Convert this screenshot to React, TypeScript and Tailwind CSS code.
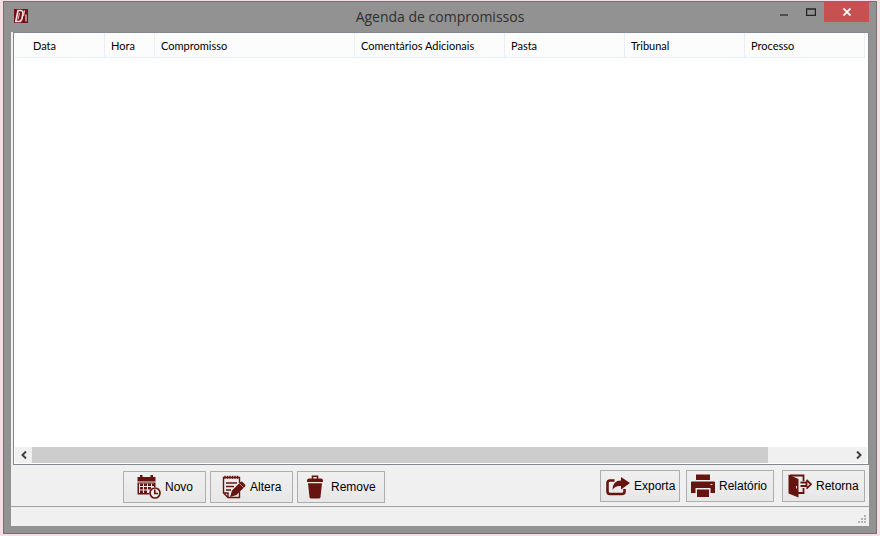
import type { ReactNode } from 'react'

const columns = [
  { label: 'Data', className: 'w-[90px] pl-[18px]' },
  { label: 'Hora', className: 'w-[50px] pl-1.5' },
  { label: 'Compromisso', className: 'w-[200px] pl-1.5' },
  { label: 'Comentários Adicionais', className: 'w-[150px] pl-1.5' },
  { label: 'Pasta', className: 'w-[120px] pl-1.5' },
  { label: 'Tribunal', className: 'w-[120px] pl-1.5' },
  { label: 'Processo', className: 'w-[120px] pl-1.5' },
]

function AppLogo() {
  return (
    <svg viewBox="0 0 14 14" className="h-3.5 w-3.5" aria-hidden="true">
      <rect width="14" height="14" fill="#6d1418" />
      <path d="M4 1.500h3q2.500 0 1.800 4L8 9.500q-.8 3-3 3H1.800z" fill="none" stroke="#f3dedd" strokeWidth="1.700" />
      <path d="M5.500 4 4 10.500" stroke="#e9bcbb" strokeWidth="1" />
      <path d="M10.500 1.500 9.500 7M12 5.500v7" fill="none" stroke="#f0cfce" strokeWidth="1.200" />
    </svg>
  )
}

function CalendarClockIcon() {
  return (
    <svg viewBox="0 0 24 24" className="h-6 w-6" fill="#661410" aria-hidden="true">
      <path d="M.5 2H3V0h2.500v2h8V0H16v2h2.500v4.500H.5z" />
      <path d="M.5 7.500h18v5H17V8.500H2v9.500h10v1.500H.5z" />
      <path d="M3 8.500h3V11H3zM7 8.500h3V11H7zM11 8.500h3V11h-3zM15 8.500h2.500V11H15zM3 12h3v2.500H3zM7 12h3v2.500H7zM11 12h3v2.500h-3zM3 15.500h3V18H3zM7 15.500h3V18H7z" />
      <circle cx="18" cy="18" r="6" fill="#ececec" />
      <circle cx="18" cy="18" r="5" fill="#ececec" stroke="#661410" strokeWidth="1.700" />
      <path d="M17.800 14.500V18.500H21" fill="none" stroke="#661410" strokeWidth="1.600" />
    </svg>
  )
}

function NotePencilIcon() {
  return (
    <svg viewBox="0 0 24 24" className="h-6 w-6" aria-hidden="true">
      <path d="M17.500 8V2.500H1.500V18L6 22.500h11.500V17M1.500 18H6v4.500" fill="none" stroke="#661410" strokeWidth="1.400" />
      <path d="M3 .8v3M5.500.8v3M8 .8v3M10.500.8v3M13 .8v3M15.500.8v3" stroke="#661410" strokeWidth="1.400" />
      <path d="M4 8h11M4 11.500h8M4 15h5" stroke="#661410" strokeWidth="1.600" />
      <path d="m10 15.500 8.500-8.500q1-.8 2 0L23 9.500q.8 1 0 2L14.500 20 8 22z" fill="#661410" />
      <path d="m17.500 8.500 4 4" stroke="#eeeeee" strokeWidth=".6" />
    </svg>
  )
}

function TrashIcon() {
  return (
    <svg viewBox="0 0 16 24" className="h-6 w-4" fill="#661410" aria-hidden="true">
      <path d="M5.500 4V1.300h5V4" fill="none" stroke="#661410" strokeWidth="1.600" />
      <path d="M2 3.500h12q2 0 2 2V7H0V5.500q0-2 2-2z" />
      <path d="M1 8.200h14L13.500 22q-.2 1.500-1.500 1.500H4q-1.300 0-1.500-1.500z" />
    </svg>
  )
}

function ExportIcon() {
  return (
    <svg viewBox="0 0 24 20" className="h-5 w-6" aria-hidden="true">
      <path d="M8.500 4.500H4q-2.500 0-2.500 2.500v8.500Q1.500 18 4 18h12q2.500 0 2.500-2.500V13" fill="none" stroke="#661410" strokeWidth="2.600" />
      <path d="M15 1 24 7l-9 6.500V10q-6-.5-8.500 4Q6.500 4.500 15 4.500z" fill="#661410" />
    </svg>
  )
}

function PrinterIcon() {
  return (
    <svg viewBox="0 0 24 24" className="h-6 w-6" fill="#661410" aria-hidden="true">
      <path d="M5 .5h14V6H5zM1 7.500h22q1 0 1 1V19h-4.500v-5h-15v5H0V8.500q0-1 1-1z" />
      <path d="M6 15.500h12v7.500H6z" />
      <path d="M19.500 10.500h2" stroke="#eeeeee" strokeWidth="1" />
    </svg>
  )
}

function DoorIcon() {
  return (
    <svg viewBox="0 0 24 24" className="h-6 w-6" aria-hidden="true">
      <path d="M2 1.500h13.500V7M15.500 14v5H10" fill="none" stroke="#661410" strokeWidth="1.800" />
      <path d="M.5.500 10.500 5v18.500L.5 19.500z" fill="#661410" />
      <path d="M8.500 12v2.500" stroke="#eeeeee" strokeWidth="1" />
      <path d="M12.500 8.500h6v3.500h-6M18.500 6l4.500 4.300-4.500 4.300" fill="none" stroke="#661410" strokeWidth="1.800" />
    </svg>
  )
}

function ToolButton({ icon, label, className }: { icon: ReactNode; label: string; className: string }) {
  return (
    <button
      type="button"
      className={`flex h-8 shrink-0 items-center border border-[#adadad] bg-gradient-to-b from-[#f0f0f0] to-[#e7e7e7] text-[12px] whitespace-nowrap text-black ${className}`}
    >
      {icon}
      {label}
    </button>
  )
}

export default function App() {
  return (
    <div className="flex min-h-screen bg-[#f6dfe2] pt-px pr-[3px] pb-0.5 pl-[3px] font-['Liberation_Sans',Arial,sans-serif]">
      <div className="flex min-w-0 flex-1 flex-col border border-[#727272] bg-[#929292] px-[7px] pb-[7px]">
        <header className="grid h-[30px] shrink-0 grid-cols-[1fr_auto_1fr] items-start">
          <div className="pt-[7px] pl-[3px]">
            <AppLogo />
          </div>
          <h1 className="pt-1 font-['Open_Sans',sans-serif] text-[14px] leading-[22px] text-[#303030]">
            Agenda de compromissos
          </h1>
          <div className="flex justify-end">
            <button type="button" aria-label="Minimizar" className="flex h-5 w-[27px] items-center justify-center">
              <svg viewBox="0 0 10 10" className="h-2.5 w-2.5" aria-hidden="true">
                <path d="M1 8h8" stroke="#505050" strokeWidth="2" />
              </svg>
            </button>
            <button type="button" aria-label="Maximizar" className="flex h-5 w-[27px] items-center justify-center">
              <svg viewBox="0 0 10 8" className="h-2 w-2.5" aria-hidden="true">
                <path d="M0 1h10M.5 1v7M9.500 1v7M0 7.500h10" fill="none" stroke="#252525" strokeWidth="1.500" />
              </svg>
            </button>
            <button type="button" aria-label="Fechar" className="flex h-5 w-[45px] items-center justify-center bg-[#c75050]">
              <svg viewBox="0 0 8 8" className="h-2 w-2" aria-hidden="true">
                <path d="m.5.5 7 7m0-7-7 7" stroke="white" strokeWidth="1.800" />
              </svg>
            </button>
          </div>
        </header>

        <main className="flex min-h-0 flex-1 flex-col bg-[#f0f0f0]">
          <section className="ml-0.5 flex flex-1 flex-col border border-[#828790] bg-white px-px">
            <div className="flex-1 overflow-hidden">
              <table className="w-[850px] table-fixed border-separate border-spacing-0 text-left font-['Lato',sans-serif] text-[11px] text-black">
                <thead>
                  <tr className="bg-[#fcfcfd]">
                    {columns.map((col) => (
                      <th
                        key={col.label}
                        scope="col"
                        className={`h-[25px] border-r border-b border-[#e9eef5] pt-0.5 leading-4 font-normal ${col.className}`}
                      >
                        {col.label}
                      </th>
                    ))}
                  </tr>
                </thead>
                <tbody />
              </table>
            </div>

            {/* horizontal scrollbar */}
            <div className="mb-px flex h-4 shrink-0 bg-[#f0f0f0]">
              <button type="button" aria-label="Rolar para a esquerda" className="flex w-[17px] items-center justify-center">
                <svg viewBox="0 0 6 8" className="h-2 w-1.5" aria-hidden="true">
                  <path d="M5 .5 1.500 4 5 7.500" fill="none" stroke="#404040" strokeWidth="2" />
                </svg>
              </button>
              <div className="flex-1">
                <div className="h-full w-9/10 bg-[#cdcdcd]" />
              </div>
              <button type="button" aria-label="Rolar para a direita" className="flex w-[17px] items-center justify-center">
                <svg viewBox="0 0 6 8" className="h-2 w-1.5" aria-hidden="true">
                  <path d="M1 .5 4.500 4 1 7.500" fill="none" stroke="#404040" strokeWidth="2" />
                </svg>
              </button>
            </div>
          </section>

          <div className="flex shrink-0 items-start justify-between border-b border-[#a0a0a0] pt-[5px] pr-1 pb-[3px] pl-28">
            <div className="flex gap-1 pt-px">
              <ToolButton icon={<CalendarClockIcon />} label="Novo" className="w-[83px] gap-1 pl-[13px]" />
              <ToolButton icon={<NotePencilIcon />} label="Altera" className="w-[83px] gap-1 pl-[11px]" />
              <ToolButton icon={<TrashIcon />} label="Remove" className="w-[88px] gap-2 pl-[9px]" />
            </div>
            <div className="flex">
              <ToolButton icon={<ExportIcon />} label="Exporta" className="mr-1.5 w-20 gap-1 pl-[5px]" />
              <ToolButton icon={<PrinterIcon />} label="Relatório" className="mr-2 w-[88px] gap-1 pl-1" />
              <ToolButton icon={<DoorIcon />} label="Retorna" className="w-[83px] gap-1 pl-[5px]" />
            </div>
          </div>

          <footer className="flex h-[19px] shrink-0 items-end justify-end pr-0.5 pb-0.5">
            <svg viewBox="0 0 9 9" className="h-[9px] w-[9px]" fill="#b4b4b4" aria-hidden="true">
              <path d="M6 0h2v2H6zM3 3h2v2H3zM6 3h2v2H6zM0 6h2v2H0zM3 6h2v2H3zM6 6h2v2H6z" />
            </svg>
          </footer>
        </main>
      </div>
    </div>
  )
}
